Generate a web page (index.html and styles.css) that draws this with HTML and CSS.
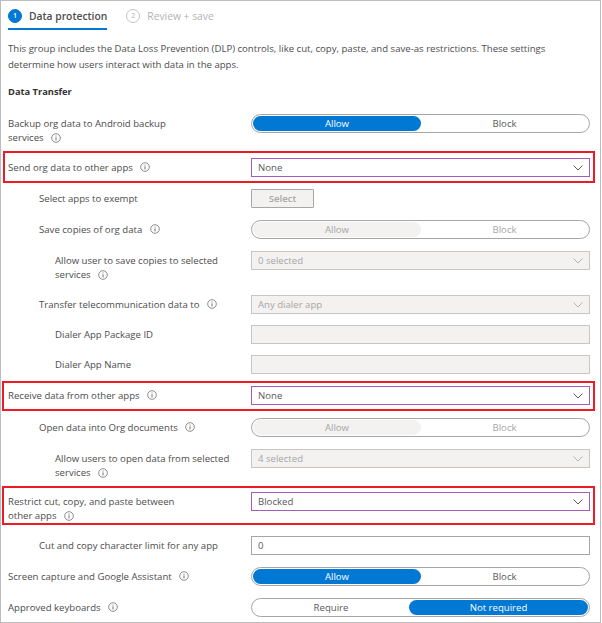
FILE: index.html
```html
<!DOCTYPE html>
<html lang="en">
<head>
  <meta charset="UTF-8">
  <title>Data protection</title>
  <link rel="stylesheet" href="styles.css">
</head>
<body>
  <svg class="defs" width="0" height="0">
    <symbol id="info" viewBox="0 0 10 10">
      <circle cx="5" cy="5" r="4.3" fill="none" stroke="#6e6e6e" stroke-width="0.8"/>
      <path d="M5 4.4V7.4" stroke="#6e6e6e" stroke-width="1"/>
      <path d="M5 2.6V3.5" stroke="#6e6e6e" stroke-width="1"/>
    </symbol>
    <symbol id="chevron" viewBox="0 0 10 6">
      <path d="M0.5 0.5L5 5L9.5 0.5" fill="none" stroke="currentColor" stroke-width="1"/>
    </symbol>
  </svg>

  <div class="page">
    <!-- Wizard tabs -->
    <div class="tabs">
      <div class="tab active">
        <span class="step">1</span>
        <span>Data protection</span>
      </div>
      <div class="tab">
        <span class="step">2</span>
        <span>Review + save</span>
      </div>
    </div>

    <p class="intro">This group includes the Data Loss Prevention (DLP) controls, like cut, copy, paste, and save-as restrictions. These settings determine how users interact with data in the apps.</p>
    <h2 class="section">Data Transfer</h2>

    <div class="rows">
      <div class="row tall">
        <div class="label">Backup org data to Android backup<br>services <svg class="info"><use href="#info"/></svg></div>
        <div class="toggle"><span class="opt on">Allow</span><span class="opt">Block</span></div>
      </div>

      <div class="row flagged flag-send">
        <div class="label">Send org data to other apps <svg class="info"><use href="#info"/></svg></div>
        <div class="select focus">None<svg class="chevron"><use href="#chevron"/></svg></div>
      </div>

      <div class="row">
        <div class="label lvl1">Select apps to exempt</div>
        <div><button class="pick">Select</button></div>
      </div>

      <div class="row">
        <div class="label lvl1">Save copies of org data <svg class="info"><use href="#info"/></svg></div>
        <div class="toggle off"><span class="opt on">Allow</span><span class="opt">Block</span></div>
      </div>

      <div class="row tall">
        <div class="label lvl2">Allow user to save copies to selected<br>services <svg class="info"><use href="#info"/></svg></div>
        <div class="select off">0 selected<svg class="chevron"><use href="#chevron"/></svg></div>
      </div>

      <div class="row">
        <div class="label lvl1">Transfer telecommunication data to <svg class="info"><use href="#info"/></svg></div>
        <div class="select off">Any dialer app<svg class="chevron"><use href="#chevron"/></svg></div>
      </div>

      <div class="row snug">
        <div class="label lvl2">Dialer App Package ID</div>
        <div class="select off"></div>
      </div>

      <div class="row snug">
        <div class="label lvl2">Dialer App Name</div>
        <div class="select off"></div>
      </div>

      <div class="row flagged flag-receive">
        <div class="label">Receive data from other apps <svg class="info"><use href="#info"/></svg></div>
        <div class="select focus">None<svg class="chevron"><use href="#chevron"/></svg></div>
      </div>

      <div class="row">
        <div class="label lvl1">Open data into Org documents <svg class="info"><use href="#info"/></svg></div>
        <div class="toggle off"><span class="opt on">Allow</span><span class="opt">Block</span></div>
      </div>

      <div class="row tall">
        <div class="label lvl2">Allow users to open data from selected<br>services <svg class="info"><use href="#info"/></svg></div>
        <div class="select off">4 selected<svg class="chevron"><use href="#chevron"/></svg></div>
      </div>

      <div class="row tall flagged flag-restrict">
        <div class="label">Restrict cut, copy, and paste between<br>other apps <svg class="info"><use href="#info"/></svg></div>
        <div class="select focus">Blocked<svg class="chevron"><use href="#chevron"/></svg></div>
      </div>

      <div class="row">
        <div class="label lvl1">Cut and copy character limit for any app</div>
        <div class="select plain">0</div>
      </div>

      <div class="row">
        <div class="label">Screen capture and Google Assistant <svg class="info"><use href="#info"/></svg></div>
        <div class="toggle"><span class="opt on">Allow</span><span class="opt">Block</span></div>
      </div>

      <div class="row">
        <div class="label">Approved keyboards <svg class="info"><use href="#info"/></svg></div>
        <div class="toggle second"><span class="opt">Require</span><span class="opt on">Not required</span></div>
      </div>
    </div>
  </div>
</body>
</html>
```

FILE: styles.css
```css
/* General styles */
body {
  margin: 0;
  font-family: "Open Sans", Arial, sans-serif;
  font-size: 9.6px;
  color: #4d4d4d;
  background-color: #fff;
}

.defs {
  display: block;
}

.page {
  box-sizing: border-box;
  width: 601px;
  height: 623px;
  padding: 0 11px 0 7px;
  border: 1px solid #bdbdbd;
  overflow: hidden;
}

/* Wizard tabs */
.tabs {
  display: flex;
  gap: 19px;
  height: 29px;
  padding-top: 2px;
}

.tab {
  display: flex;
  align-items: center;
  gap: 7px;
  height: 24px;
  padding-top: 1px;
  font-size: 10.3px;
  color: #b3b3b3;
}

.tab.active {
  color: #4d4d4d;
  font-weight: 600;
  border-bottom: 2px solid #0078d4;
}

.step {
  box-sizing: border-box;
  width: 14px;
  height: 14px;
  border: 1px solid #c4c4c4;
  border-radius: 50%;
  font-size: 7px;
  line-height: 12px;
  text-align: center;
}

.active .step {
  background-color: #0078d4;
  border-color: #0078d4;
  color: #fff;
}

/* Intro */
.intro {
  margin: 9px 0 0;
  line-height: 16px;
}

.section {
  margin: 12px 0 0;
  font-size: 9.3px;
  line-height: 14px;
  font-weight: 700;
  color: #333;
}

/* Setting rows */
.rows {
  display: flex;
  flex-direction: column;
  gap: 12px;
  margin-top: 15px;
}

.row {
  display: grid;
  grid-template-columns: 243px 339px;
  align-items: center;
  height: 19px;
}

.row.tall {
  height: 32px;
  align-items: start;
}

.row.snug {
  margin-top: -1px;
}

.label {
  line-height: 14px;
}

.tall .label {
  padding-top: 3px;
}

.lvl1 {
  padding-left: 31px;
}

.lvl2 {
  padding-left: 47px;
}

.info {
  width: 10px;
  height: 10px;
  margin-left: 5px;
  vertical-align: -1.5px;
}

/* Red annotation boxes */
.flagged {
  box-sizing: content-box;
  border: 2px solid #ed1c24;
}

.flag-send {
  margin: -7px -6px -6px -5px;
  padding: 5px 4px 4px 3px;
}

.flag-receive {
  margin: -5px -6px -5px -6px;
  padding: 3px 4px 4px 4px;
}

.row.flag-restrict {
  height: 31px;
  margin: -7px -6px -1px -6px;
  padding: 4px 4px 0 4px;
}

/* Controls */
.select {
  box-sizing: border-box;
  display: flex;
  align-items: center;
  justify-content: space-between;
  height: 19px;
  padding: 0 6px 0 6px;
  border: 1px solid #a6a6a6;
  background-color: #fff;
  color: #595959;
}

.select.focus {
  border-color: #a45bbd;
}

.select.off {
  background-color: #f3f2f1;
  color: #a6a6a6;
  border-color: #c8c6c4;
}

.chevron {
  width: 10px;
  height: 6px;
  color: #595959;
}

.off .chevron {
  color: #b3b3b3;
}

.toggle {
  box-sizing: border-box;
  display: grid;
  grid-template-columns: 168px 1fr;
  height: 19px;
  padding: 1px;
  border: 1px solid #a6a6a6;
  border-radius: 10px;
  background-color: #fff;
}

.toggle.second {
  grid-template-columns: 156px 1fr;
}

.opt {
  border-radius: 8px;
  line-height: 15px;
  text-align: center;
  color: #595959;
}

.opt.on {
  background-color: #0078d4;
  color: #fff;
}

.toggle.off .opt {
  color: #a6a6a6;
}

.toggle.off .opt.on {
  background-color: #f3f2f1;
}

.pick {
  display: block;
  box-sizing: border-box;
  width: 63px;
  height: 19px;
  padding: 0;
  border: 1px solid #a6a6a6;
  border-radius: 1px;
  background-color: #f3f2f1;
  font: inherit;
  font-weight: 600;
  color: #a6a6a6;
}
```
